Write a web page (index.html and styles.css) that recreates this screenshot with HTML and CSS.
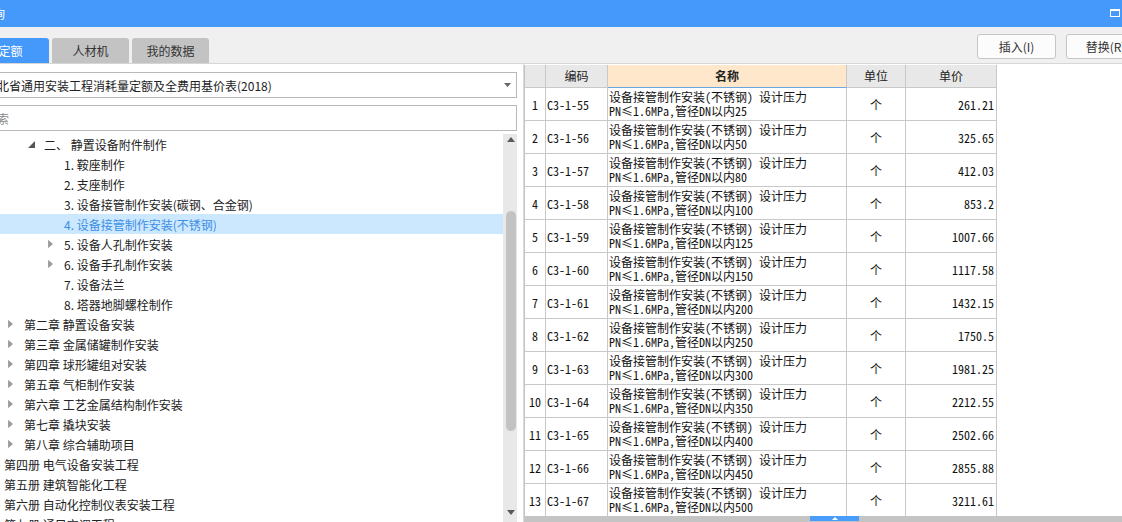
FILE: index.html
```html
<!DOCTYPE html>
<html lang="zh">
<head>
<meta charset="utf-8">
<title>定额查询</title>
<link rel="stylesheet" href="styles.css">
</head>
<body>
<div class="app">
  <header class="titlebar">
    <span class="title">查询</span>
    <svg class="max-icon" width="10" height="8" viewBox="0 0 10 8"><rect x="0.5" y="0.5" width="9" height="7" fill="none" stroke="#fff" stroke-width="1"/><rect x="0" y="0" width="10" height="2" fill="#fff"/></svg>
  </header>

  <div class="toolbar">
    <div class="tabs">
      <div class="tab active">定额</div>
      <div class="tab">人材机</div>
      <div class="tab">我的数据</div>
    </div>
    <div class="actions">
      <button class="btn">插入(I)</button>
      <button class="btn">替换(R)</button>
    </div>
  </div>

  <div class="main">
    <aside class="left">
      <div class="combo">
        <span class="combo-text">湖北省通用安装工程消耗量定额及全费用基价表(2018)</span>
        <svg class="combo-arrow" width="7" height="4" viewBox="0 0 7 4"><path d="M0 0H7L3.5 4Z" fill="#666"/></svg>
      </div>
      <div class="search"><span class="placeholder">搜索</span></div>
      <div class="tree-wrap">
        <ul class="tree">
          <li class="node lv2"><svg class="tw open" width="7" height="7" viewBox="0 0 7 7"><path d="M7 0V7H0Z" fill="#555"/></svg><span>二、 静置设备附件制作</span></li>
          <li class="node lv3"><span>1. 鞍座制作</span></li>
          <li class="node lv3"><span>2. 支座制作</span></li>
          <li class="node lv3"><span>3. 设备接管制作安装(碳钢、合金钢)</span></li>
          <li class="node lv3 selected"><span>4. 设备接管制作安装(不锈钢)</span></li>
          <li class="node lv3"><svg class="tw" width="5" height="8" viewBox="0 0 5 8"><path d="M0.5 0.5L4.5 4L0.5 7.5Z" fill="#999" stroke="#888" stroke-width="0.6"/></svg><span>5. 设备人孔制作安装</span></li>
          <li class="node lv3"><svg class="tw" width="5" height="8" viewBox="0 0 5 8"><path d="M0.5 0.5L4.5 4L0.5 7.5Z" fill="#999" stroke="#888" stroke-width="0.6"/></svg><span>6. 设备手孔制作安装</span></li>
          <li class="node lv3"><span>7. 设备法兰</span></li>
          <li class="node lv3"><span>8. 塔器地脚螺栓制作</span></li>
          <li class="node lv1"><svg class="tw" width="5" height="8" viewBox="0 0 5 8"><path d="M0.5 0.5L4.5 4L0.5 7.5Z" fill="#999" stroke="#888" stroke-width="0.6"/></svg><span>第二章 静置设备安装</span></li>
          <li class="node lv1"><svg class="tw" width="5" height="8" viewBox="0 0 5 8"><path d="M0.5 0.5L4.5 4L0.5 7.5Z" fill="#999" stroke="#888" stroke-width="0.6"/></svg><span>第三章 金属储罐制作安装</span></li>
          <li class="node lv1"><svg class="tw" width="5" height="8" viewBox="0 0 5 8"><path d="M0.5 0.5L4.5 4L0.5 7.5Z" fill="#999" stroke="#888" stroke-width="0.6"/></svg><span>第四章 球形罐组对安装</span></li>
          <li class="node lv1"><svg class="tw" width="5" height="8" viewBox="0 0 5 8"><path d="M0.5 0.5L4.5 4L0.5 7.5Z" fill="#999" stroke="#888" stroke-width="0.6"/></svg><span>第五章 气柜制作安装</span></li>
          <li class="node lv1"><svg class="tw" width="5" height="8" viewBox="0 0 5 8"><path d="M0.5 0.5L4.5 4L0.5 7.5Z" fill="#999" stroke="#888" stroke-width="0.6"/></svg><span>第六章 工艺金属结构制作安装</span></li>
          <li class="node lv1"><svg class="tw" width="5" height="8" viewBox="0 0 5 8"><path d="M0.5 0.5L4.5 4L0.5 7.5Z" fill="#999" stroke="#888" stroke-width="0.6"/></svg><span>第七章 撬块安装</span></li>
          <li class="node lv1"><svg class="tw" width="5" height="8" viewBox="0 0 5 8"><path d="M0.5 0.5L4.5 4L0.5 7.5Z" fill="#999" stroke="#888" stroke-width="0.6"/></svg><span>第八章 综合辅助项目</span></li>
          <li class="node lv0"><span>第四册 电气设备安装工程</span></li>
          <li class="node lv0"><span>第五册 建筑智能化工程</span></li>
          <li class="node lv0"><span>第六册 自动化控制仪表安装工程</span></li>
          <li class="node lv0"><span>第七册 通风空调工程</span></li>
        </ul>
        <div class="vscroll">
          <svg class="vs-up" width="8" height="5" viewBox="0 0 8 5"><path d="M0 5H8L4 0Z" fill="#5a5a5a"/></svg>
          <div class="vs-thumb"></div>
          <svg class="vs-down" width="8" height="5" viewBox="0 0 8 5"><path d="M0 0H8L4 5Z" fill="#5a5a5a"/></svg>
        </div>
      </div>
    </aside>

    <section class="right">
      <div class="grid-wrap">
        <div class="grid">
          <div class="hc"></div>
          <div class="hc">编码</div>
          <div class="hc hc-name">名称</div>
          <div class="hc">单位</div>
          <div class="hc">单价</div>

          <div class="c c-no">1</div><div class="c c-code">C3-1-55</div><div class="c c-name"><div>设备接管制作安装(不锈钢) 设计压力</div><div>PN≤1.6MPa,管径DN以内25</div></div><div class="c c-unit">个</div><div class="c c-price">261.21</div>
          <div class="c c-no">2</div><div class="c c-code">C3-1-56</div><div class="c c-name"><div>设备接管制作安装(不锈钢) 设计压力</div><div>PN≤1.6MPa,管径DN以内50</div></div><div class="c c-unit">个</div><div class="c c-price">325.65</div>
          <div class="c c-no">3</div><div class="c c-code">C3-1-57</div><div class="c c-name"><div>设备接管制作安装(不锈钢) 设计压力</div><div>PN≤1.6MPa,管径DN以内80</div></div><div class="c c-unit">个</div><div class="c c-price">412.03</div>
          <div class="c c-no">4</div><div class="c c-code">C3-1-58</div><div class="c c-name"><div>设备接管制作安装(不锈钢) 设计压力</div><div>PN≤1.6MPa,管径DN以内100</div></div><div class="c c-unit">个</div><div class="c c-price">853.2</div>
          <div class="c c-no">5</div><div class="c c-code">C3-1-59</div><div class="c c-name"><div>设备接管制作安装(不锈钢) 设计压力</div><div>PN≤1.6MPa,管径DN以内125</div></div><div class="c c-unit">个</div><div class="c c-price">1007.66</div>
          <div class="c c-no">6</div><div class="c c-code">C3-1-60</div><div class="c c-name"><div>设备接管制作安装(不锈钢) 设计压力</div><div>PN≤1.6MPa,管径DN以内150</div></div><div class="c c-unit">个</div><div class="c c-price">1117.58</div>
          <div class="c c-no">7</div><div class="c c-code">C3-1-61</div><div class="c c-name"><div>设备接管制作安装(不锈钢) 设计压力</div><div>PN≤1.6MPa,管径DN以内200</div></div><div class="c c-unit">个</div><div class="c c-price">1432.15</div>
          <div class="c c-no">8</div><div class="c c-code">C3-1-62</div><div class="c c-name"><div>设备接管制作安装(不锈钢) 设计压力</div><div>PN≤1.6MPa,管径DN以内250</div></div><div class="c c-unit">个</div><div class="c c-price">1750.5</div>
          <div class="c c-no">9</div><div class="c c-code">C3-1-63</div><div class="c c-name"><div>设备接管制作安装(不锈钢) 设计压力</div><div>PN≤1.6MPa,管径DN以内300</div></div><div class="c c-unit">个</div><div class="c c-price">1981.25</div>
          <div class="c c-no">10</div><div class="c c-code">C3-1-64</div><div class="c c-name"><div>设备接管制作安装(不锈钢) 设计压力</div><div>PN≤1.6MPa,管径DN以内350</div></div><div class="c c-unit">个</div><div class="c c-price">2212.55</div>
          <div class="c c-no">11</div><div class="c c-code">C3-1-65</div><div class="c c-name"><div>设备接管制作安装(不锈钢) 设计压力</div><div>PN≤1.6MPa,管径DN以内400</div></div><div class="c c-unit">个</div><div class="c c-price">2502.66</div>
          <div class="c c-no">12</div><div class="c c-code">C3-1-66</div><div class="c c-name"><div>设备接管制作安装(不锈钢) 设计压力</div><div>PN≤1.6MPa,管径DN以内450</div></div><div class="c c-unit">个</div><div class="c c-price">2855.88</div>
          <div class="c c-no">13</div><div class="c c-code">C3-1-67</div><div class="c c-name"><div>设备接管制作安装(不锈钢) 设计压力</div><div>PN≤1.6MPa,管径DN以内500</div></div><div class="c c-unit">个</div><div class="c c-price">3211.61</div>
        </div>
      </div>
      <div class="hscroll">
        <div class="hthumb"><svg width="6" height="3" viewBox="0 0 6 3"><path d="M0 3H6L3 0Z" fill="#fff"/></svg></div>
      </div>
    </section>
  </div>
</div>
</body>
</html>
```

FILE: styles.css
```css
* { box-sizing: border-box; }

html, body {
  margin: 0;
  padding: 0;
  background: #fff;
}

body {
  font-family: "Noto Sans CJK SC", "Microsoft YaHei", sans-serif;
  font-size: 12px;
  color: #222;
  overflow: hidden;
}

.app {
  width: 1122px;
  height: 522px;
  display: flex;
  flex-direction: column;
  overflow: hidden;
}

/* title bar */
.titlebar {
  height: 27px;
  flex: none;
  background: #4499fb;
  display: flex;
  align-items: center;
  justify-content: space-between;
  padding-right: 2px;
}
.title {
  color: #fff;
  font-size: 12px;
  margin-left: -19px;
  line-height: 27px;
}
.max-icon { display: block; margin-top: -2px; }

/* toolbar */
.toolbar {
  height: 37px;
  flex: none;
  background: #f0f0f0;
  border-bottom: 1px solid #d6d6d6;
  display: flex;
  justify-content: space-between;
}
.tabs {
  display: flex;
  gap: 3px;
  align-self: flex-end;
  margin-left: -28px;
}
.tab {
  width: 77px;
  height: 25px;
  line-height: 25px;
  text-align: center;
  background: #c3c3c3;
  color: #333;
  border-radius: 3px 3px 0 0;
  font-size: 12px;
}
.tab.active {
  background: #4499fb;
  color: #fff;
}
.actions {
  display: flex;
  gap: 10px;
  padding-top: 7px;
  margin-right: -23px;
}
.btn {
  width: 79px;
  height: 25px;
  background: #fcfcfc;
  border: 1px solid #c6c6c6;
  border-radius: 3px;
  font-family: "Noto Sans CJK SC", sans-serif;
  font-size: 12px;
  color: #333;
  padding: 0;
}

/* main */
.main {
  flex: 1;
  display: flex;
  min-height: 0;
}

.left {
  width: 523px;
  flex: none;
  display: flex;
  flex-direction: column;
  min-height: 0;
}
.combo {
  margin: 8px 6px 0 -20px;
  height: 26px;
  border: 1px solid #b8b8b8;
  background: #fff;
  display: flex;
  align-items: center;
  justify-content: space-between;
  padding-right: 5px;
  overflow: hidden;
}
.combo-text {
  margin-left: 4px;
  white-space: nowrap;
  font-size: 12px;
  color: #222;
}
.combo-arrow { display: block; flex: none; }
.search {
  margin: 7px 6px 0 -20px;
  height: 26px;
  border: 1px solid #b8b8b8;
  background: #fff;
  display: flex;
  align-items: center;
  overflow: hidden;
}
.placeholder {
  margin-left: 4px;
  color: #8a8a8a;
  white-space: nowrap;
}

.tree-wrap {
  margin-top: 3px;
  flex: 1;
  display: flex;
  min-height: 0;
  margin-right: 6px;
}
.tree {
  list-style: none;
  margin: 0;
  padding: 0;
  flex: 1;
  overflow: hidden;
}
.node {
  height: 20px;
  display: flex;
  align-items: center;
  position: relative;
  white-space: nowrap;
  color: #222;
  font-size: 12px;
}
.node .tw {
  position: absolute;
  top: 6px;
}
.node .tw.open { top: 7px; }
.lv0 { padding-left: 4px; }
.lv1 { padding-left: 24px; }
.lv1 .tw { left: 8px; }
.lv2 { padding-left: 44px; }
.lv2 .tw { left: 28px; }
.lv3 { padding-left: 64px; }
.lv3 .tw { left: 48px; }
.node.selected {
  background: #cce8ff;
  color: #3d8ee6;
}

.vscroll {
  width: 14px;
  flex: none;
  background: #e8e8e8;
  display: flex;
  flex-direction: column;
  align-items: center;
  padding-top: 3px;
}
.vs-up { display: block; margin-left: 1px; }
.vs-thumb {
  width: 10px;
  height: 220px;
  margin-top: 69px;
  margin-left: 1px;
  background: #c2c2c2;
  border-radius: 5px;
}
.vs-down { display: block; margin-top: 79px; margin-left: 1px; }

/* right panel */
.right {
  flex: 1;
  display: flex;
  flex-direction: column;
  min-width: 0;
  border-left: 1px solid #dadada;
}
.grid-wrap {
  flex: 1;
  min-height: 0;
  overflow: hidden;
  padding-top: 1px;
}
.grid {
  display: grid;
  grid-template-columns: 21px 62px 239px 59px 91px;
  grid-template-rows: 23px;
  grid-auto-rows: 33px;
  width: 473px;
  border-left: 1px solid #c4c4c4;
}
.hc {
  background: #e8e8e8;
  border-right: 1px solid #c8c8c8;
  border-bottom: 1px solid #c8c8c8;
  text-align: center;
  line-height: 22px;
  font-size: 12px;
  color: #222;
}
.hc-name {
  background: #fee7cb;
  border-bottom-color: #6aa6e0;
  font-weight: bold;
}
.c {
  border-right: 1px solid #c8c8c8;
  border-bottom: 1px solid #c8c8c8;
  font-family: "Noto Sans Mono CJK SC", "Liberation Mono", "Noto Sans CJK SC", monospace;
  font-size: 12px;
  color: #111;
  white-space: nowrap;
  overflow: hidden;
}
.c-no {
  display: flex;
  align-items: center;
  justify-content: center;
  padding-top: 1px;
}
.c-code {
  display: flex;
  align-items: center;
  padding-left: 1px;
}
.c-name {
  padding: 2px 0 0 1px;
  line-height: 14px;
}
.c-unit {
  display: flex;
  align-items: center;
  justify-content: center;
  font-family: "Noto Sans CJK SC", sans-serif;
}
.c-price {
  display: flex;
  align-items: center;
  justify-content: flex-end;
  padding-right: 2px;
}

.hscroll {
  height: 6px;
  flex: none;
  background: #c4c4c4;
  position: relative;
}
.hthumb {
  position: absolute;
  left: 286px;
  top: 0;
  width: 49px;
  height: 5px;
  background: #4a9cfb;
  display: flex;
  justify-content: center;
  align-items: flex-start;
  padding-top: 1px;
}
.hthumb svg { display: block; }
```
